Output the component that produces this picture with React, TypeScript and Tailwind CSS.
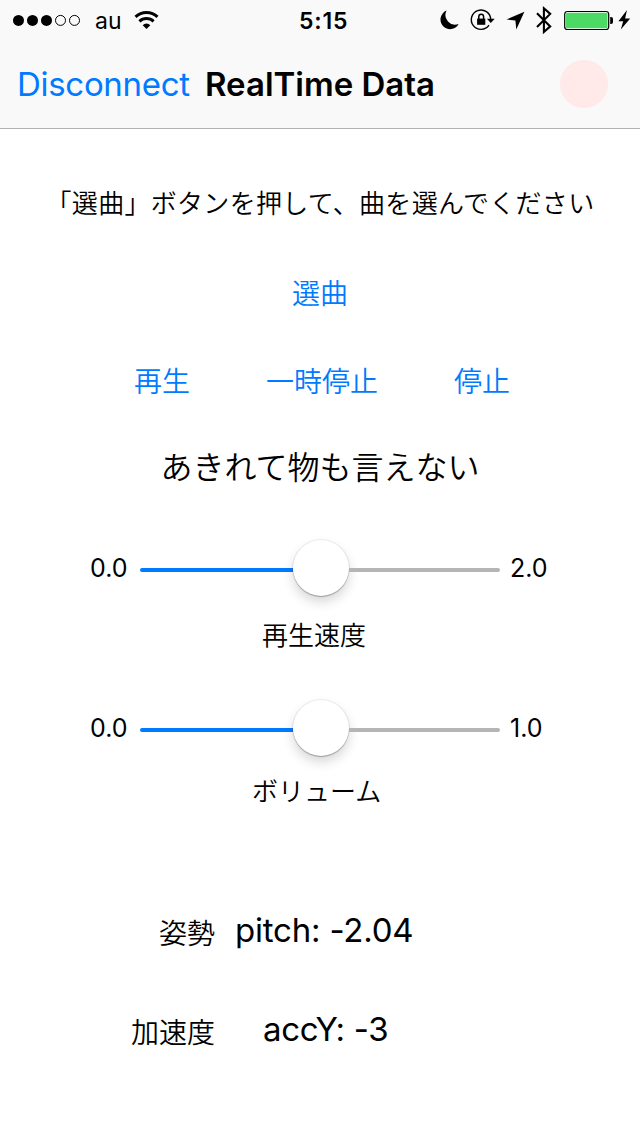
import type { ReactNode } from "react";

const latin = "font-['Inter','Liberation_Sans',sans-serif]";
const japanese = "font-['Noto_Sans_CJK_JP',sans-serif] font-[350]";

function StatusBar() {
  return (
    <div className="flex h-10 items-center">
      <svg className="ml-3 h-4 w-[70px] shrink-0" viewBox="0 0 70 16">
        {[6.5, 20.5, 34.5].map((cx) => (
          <circle key={cx} cx={cx} cy="8.4" r="5.5" fill="#000" />
        ))}
        {[48.5, 62.5].map((cx) => (
          <circle key={cx} cx={cx} cy="8.4" r="5" fill="none" stroke="#000" strokeWidth="1" />
        ))}
      </svg>
      <span className={`${latin} ml-[13px] w-[39px] pt-px text-[23px] leading-10`}>au</span>
      <svg className="h-5 w-[26px] shrink-0" viewBox="0 0 26 20">
        <path d="M12.5 19 8.7 15.2a5.2 5.2 0 0 1 7.6 0Z" fill="#000" />
        <path d="M1.5 6.9a15.8 15.8 0 0 1 22 0M5.4 11.4a10.2 10.2 0 0 1 14.2 0" fill="none" stroke="#000" strokeWidth="2.9" />
      </svg>
      <span className={`${latin} ml-[139px] w-[140px] pt-px text-[23px] leading-10 font-semibold tracking-[0.8px]`}>5:15</span>
      <svg className="h-10 w-[201px] shrink-0" viewBox="439 0 201 40">
        <path d="M446.6 10.6a9.6 9.6 0 1 0 12 13.4 9.6 9.6 0 0 1-12-13.4Z" fill="#000" />
        <path d="M489 25.2a9.7 9.7 0 1 1 1.7-5.9" fill="none" stroke="#000" strokeWidth="1.4" />
        <path d="M486.9 18.8h7.8l-3.9 4.1Z" fill="#000" />
        <rect x="477.1" y="18.6" width="8.2" height="6.2" fill="#000" />
        <path d="M478.8 19v-2.2a2.4 2.6 0 0 1 4.8 0V19" fill="none" stroke="#000" strokeWidth="1.5" />
        <path d="m524.4 11.7-18 7.8 9 .9.9 9.2Z" fill="#000" />
        <path d="m537 13.2 13.2 13.2-6.3 5.6V8.3l6.3 5.6L537 27" fill="none" stroke="#000" strokeWidth="2.1" />
        <rect x="564.7" y="11.5" width="44" height="18" rx="2.8" fill="#fff" stroke="#000" strokeWidth="1.2" />
        <rect x="565.9" y="12.7" width="41.6" height="15.6" rx="1.6" fill="#4cd964" />
        <path d="M610.2 17h.8a2 2 0 0 1 2 2v3a2 2 0 0 1-2 2h-.8Z" fill="#000" />
        <path d="m627 10-8.6 11.2h4.8l-2.4 8.4 9.4-11.2h-5.1Z" fill="#000" />
      </svg>
    </div>
  );
}

function Slider({ min, max }: { min: string; max: string }) {
  return (
    <div className="flex h-[60px] items-center pl-[90px]">
      <span className={`${latin} w-[50px] pb-0.5 text-[25px]`}>{min}</span>
      <div className="flex h-[60px] w-[360px] items-center">
        <div className="h-1 w-[153px] rounded-l-full bg-[#007aff]" />
        <div className="mb-1 size-14 rounded-full bg-white shadow-[0_0_0_1px_rgba(0,0,0,0.06),0_1px_1px_rgba(0,0,0,0.25),0_6px_12px_rgba(0,0,0,0.16)]" />
        <div className="h-1 flex-1 rounded-r-full bg-[#b5b5b5]" />
      </div>
      <span className={`${latin} ml-[10px] pb-0.5 text-[25px]`}>{max}</span>
    </div>
  );
}

function Action({ className, children }: { className: string; children: ReactNode }) {
  return (
    <button className={`${japanese} text-[28px] leading-10 whitespace-nowrap text-[#007aff] ${className}`}>
      {children}
    </button>
  );
}

export default function App() {
  return (
    <main className="h-[1136px] w-[640px] overflow-hidden bg-white text-black">
      <header className="h-[129px] border-b border-[#b2b2b2] bg-[#f9f9f9]">
        <StatusBar />
        <nav className={`${latin} flex h-[88px] items-center whitespace-nowrap`}>
          <button className="ml-[17px] w-[188px] pt-0.5 text-left text-[33px] tracking-[-0.3px] text-[#007aff]">Disconnect</button>
          <h1 className="w-[355px] pt-0.5 text-[33px] font-semibold">RealTime Data</h1>
          <span className="size-12 rounded-full bg-[#ffe9e9]" />
        </nav>
      </header>

      <p className={`${japanese} mt-[53px] text-center text-[26px] leading-10 tracking-[0.3px] whitespace-nowrap`}>
        「選曲」ボタンを押して、曲を選んでください
      </p>
      <div className="mt-[50px] flex justify-center">
        <Action className="">選曲</Action>
      </div>
      <div className="mt-12 flex">
        <Action className="ml-[134px]">再生</Action>
        <Action className="ml-[76px]">一時停止</Action>
        <Action className="ml-[76px]">停止</Action>
      </div>
      <h2 className={`${japanese} mt-[45px] text-center text-[32px] leading-10`}>あきれて物も言えない</h2>

      <section className="mt-[55px]">
        <Slider min="0.0" max="2.0" />
        <p className={`${japanese} mt-3.5 pl-[262px] text-[26px] leading-10`}>再生速度</p>
      </section>
      <section className="mt-[46px]">
        <Slider min="0.0" max="1.0" />
        <p className={`${japanese} mt-2.5 pl-[252px] text-[26px] leading-10`}>ボリューム</p>
      </section>

      <dl className="mt-[100px]">
        <div className="flex h-[99px] pl-[159px]">
          <dt className={`${japanese} w-[76px] pt-0.5 text-[28px] leading-10`}>姿勢</dt>
          <dd className={`${latin} text-[33px] leading-10 tracking-[-0.2px]`}>pitch: -2.04</dd>
        </div>
        <div className="flex pl-[131px]">
          <dt className={`${japanese} w-[132px] pt-0.5 text-[28px] leading-10`}>加速度</dt>
          <dd className={`${latin} text-[33px] leading-10 tracking-[-0.3px]`}>accY: -3</dd>
        </div>
      </dl>
    </main>
  );
}
